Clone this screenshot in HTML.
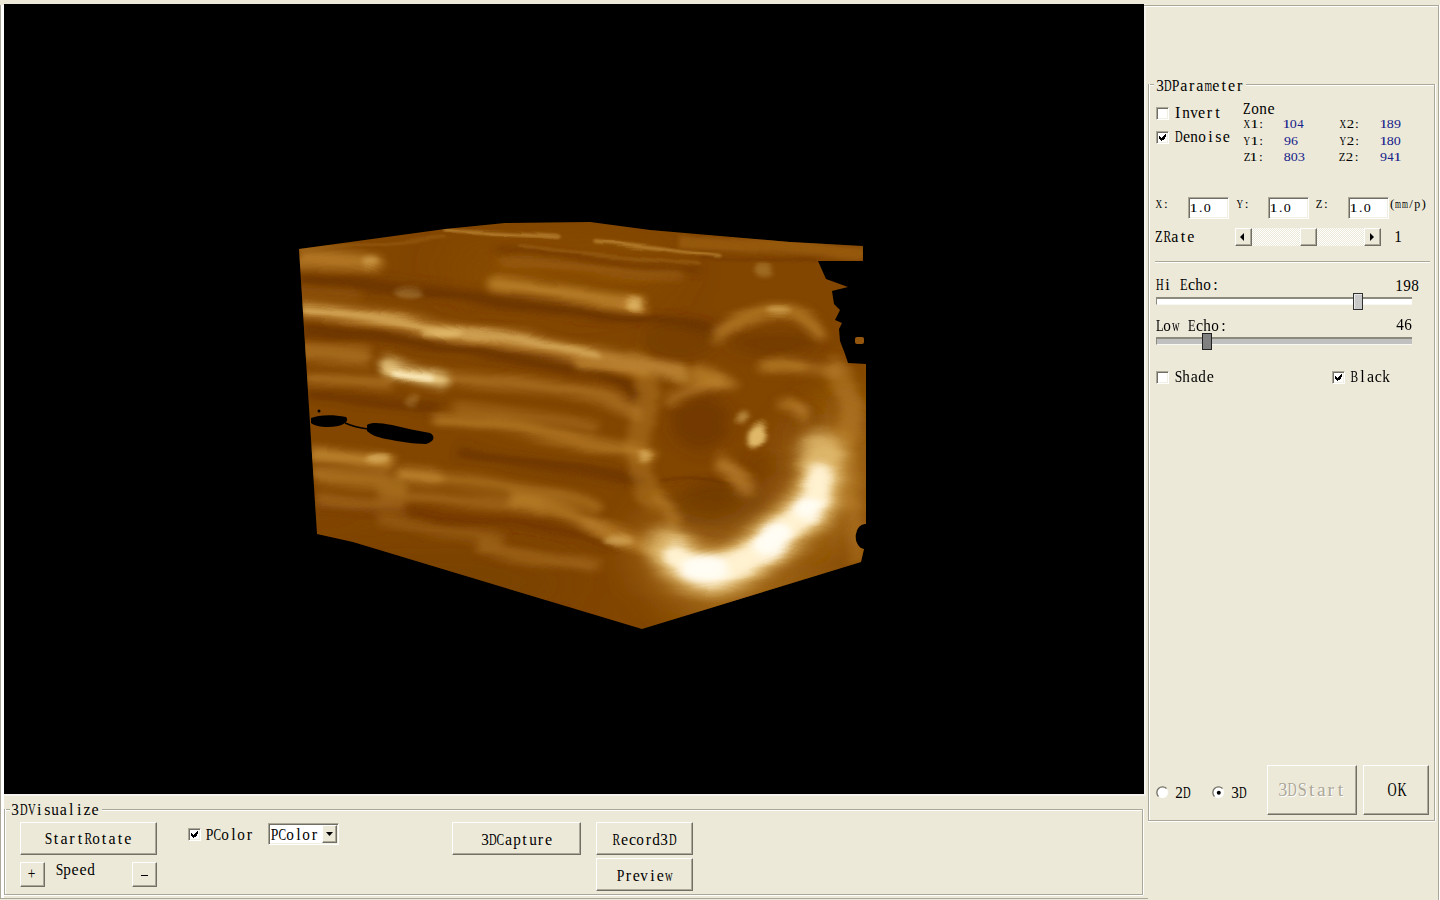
<!DOCTYPE html>
<html><head><meta charset="utf-8">
<style>
html,body{margin:0;padding:0;}
body{width:1440px;height:900px;overflow:hidden;background:#ECE9D8;position:relative;font-family:"Liberation Serif",serif;color:#000;}
.a{position:absolute;}
.t{position:absolute;white-space:nowrap;}
.t i{display:inline-block;font-style:normal;}
.hl{position:absolute;height:1px;background:#ACA899;box-shadow:0 1px 0 #fff;}
.vl{position:absolute;width:1px;background:#ACA899;box-shadow:1px 0 0 #fff;}
.btn{position:absolute;box-sizing:border-box;background:#ECE9D8;border-top:1px solid #fff;border-left:1px solid #fff;border-right:1px solid #716F64;border-bottom:1px solid #716F64;box-shadow:inset -1px -1px 0 #ACA899;}
.cb{position:absolute;box-sizing:border-box;width:13px;height:13px;background:#fff;border-top:1px solid #ACA899;border-left:1px solid #ACA899;border-right:1px solid #fff;border-bottom:1px solid #fff;box-shadow:inset 1px 1px 0 #716F64,inset -1px -1px 0 #F1EFE2;}
.ed{position:absolute;box-sizing:border-box;background:#fff;border-top:1px solid #ACA899;border-left:1px solid #ACA899;border-right:1px solid #fff;border-bottom:1px solid #fff;box-shadow:inset 1px 1px 0 #716F64,inset -1px -1px 0 #F1EFE2;}
</style></head><body>
<!-- left outer frame -->
<div class="a" style="left:0;top:5px;width:1px;height:894px;background:#ACA899"></div>
<div class="a" style="left:1px;top:5px;width:3px;height:893px;background:#fff"></div>
<div class="a" style="left:0;top:898px;width:1148px;height:1px;background:#ACA899"></div>
<div class="a" style="left:4px;top:4px;width:1140px;height:790px;background:#000"></div>
<svg class="a" style="left:0;top:0" width="1144" height="794" viewBox="0 0 1144 794">
<defs>
<clipPath id="box"><path d="M299 249 L445 229 L505 223 L590 222 L650 230 L790 242 L863 246 L863 261 L818 261 L826 279 L848 287 L832 291 L834 304 L840 310 L835 320 L842 323 L839 329 L840 341 L845 354 L848 363 L866 364 L866 524 A9 12 0 0 0 864 549 L861 562 L642 629 L353 542 L317 534 Z"/></clipPath>
<filter id="b1" filterUnits="userSpaceOnUse" x="250" y="180" width="680" height="500"><feGaussianBlur stdDeviation="1.5"/></filter>
<filter id="b2" filterUnits="userSpaceOnUse" x="250" y="180" width="680" height="500"><feGaussianBlur stdDeviation="2.5"/></filter>
<filter id="b4" filterUnits="userSpaceOnUse" x="250" y="180" width="680" height="500"><feGaussianBlur stdDeviation="4.5"/></filter>
<filter id="b7" filterUnits="userSpaceOnUse" x="250" y="180" width="680" height="500"><feGaussianBlur stdDeviation="7"/></filter>
<filter id="b12" filterUnits="userSpaceOnUse" x="250" y="180" width="680" height="500"><feGaussianBlur stdDeviation="12"/></filter>
<filter id="b20" filterUnits="userSpaceOnUse" x="250" y="180" width="680" height="500"><feGaussianBlur stdDeviation="20"/></filter>
<filter id="warp" filterUnits="userSpaceOnUse" x="250" y="180" width="680" height="500"><feTurbulence type="fractalNoise" baseFrequency="0.012 0.05" numOctaves="2" seed="7" result="n"/><feDisplacementMap in="SourceGraphic" in2="n" scale="10" xChannelSelector="R" yChannelSelector="G"/></filter>
</defs>
<g clip-path="url(#box)">
<rect x="290" y="215" width="590" height="420" fill="#824600"/>
<g filter="url(#warp)">
<!-- broad tonal zones -->
<g filter="url(#b20)">
<ellipse cx="430" cy="580" rx="150" ry="40" fill="#703800" opacity="0.35"/>
<ellipse cx="845" cy="470" rx="28" ry="95" fill="#a06616" opacity="0.7"/>
<ellipse cx="770" cy="600" rx="100" ry="25" fill="#a87020" opacity="0.6"/>
<ellipse cx="560" cy="270" rx="120" ry="30" fill="#8e5008" opacity="0.6"/>
</g>
<!-- dark bands -->
<g filter="url(#b4)" stroke="#683000" fill="none" stroke-linecap="round" opacity="0.85">
<path d="M305 281 C360 282 420 290 480 298 C540 306 590 312 640 318" stroke-width="12"/>
<path d="M305 330 C360 334 420 342 470 350 C520 358 560 364 600 374 C620 382 630 390 635 400" stroke-width="12"/>
<path d="M310 395 C360 398 400 405 440 408" stroke-width="8"/>
<path d="M460 452 C520 462 580 470 640 480" stroke-width="9"/>
<path d="M315 505 C380 508 440 520 520 524 C560 528 590 534 610 545" stroke-width="8" opacity="0.7"/>
<path d="M500 252 C560 256 620 262 700 272" stroke-width="5"/>
<path d="M650 318 C680 322 700 326 720 332" stroke-width="10"/>
<path d="M360 600 C420 610 480 620 560 615" stroke-width="16" opacity="0.5"/>
</g>
<!-- ring interior dark -->
<g filter="url(#b7)" fill="#663000">
<ellipse cx="700" cy="422" rx="30" ry="28" opacity="0.55"/>
<ellipse cx="775" cy="343" rx="45" ry="12" opacity="0.5"/>
<ellipse cx="808" cy="440" rx="18" ry="35" opacity="0.4"/>
<ellipse cx="720" cy="508" rx="50" ry="24" opacity="0.6"/>
<ellipse cx="770" cy="480" rx="30" ry="25" opacity="0.4"/>
<ellipse cx="680" cy="340" rx="40" ry="20" opacity="0.35"/>
</g>
<g filter="url(#b1)" stroke="#5a2800" fill="none" opacity="0.5">
<path d="M680 532 C710 537 740 539 770 536" stroke-width="2.5"/>
<path d="M660 480 C690 478 720 482 760 490" stroke-width="2"/>
<path d="M460 330 C500 334 530 340 560 350" stroke-width="2"/>
</g>
<!-- medium light bands -->
<g filter="url(#b4)" stroke="#c08630" fill="none" stroke-linecap="round">
<path d="M303 260 C330 259 355 261 377 264" stroke-width="14" opacity="0.8"/>
<path d="M495 284 C530 288 570 294 600 298 C615 300 628 302 638 303" stroke-width="14" opacity="0.85"/>
<path d="M580 362 C600 364 620 368 645 372" stroke-width="13" opacity="0.8"/>
<path d="M308 379 C330 379 360 380 388 382" stroke-width="11" opacity="0.6"/>
<path d="M438 420 C460 421 480 422 495 424 C530 430 555 436 580 441 C610 446 630 450 650 455" stroke-width="12" opacity="0.7"/>
<path d="M450 378 C490 380 530 384 570 390 C600 396 620 404 635 412" stroke-width="12" opacity="0.6"/><path d="M304 352 C325 353 345 355 365 357" stroke-width="14" opacity="0.6"/><path d="M318 478 C340 479 370 482 400 486" stroke-width="12" opacity="0.55"/>
<path d="M320 500 C345 502 370 505 400 508" stroke-width="12" opacity="0.45"/>
<path d="M442 478 C480 482 520 490 560 496 C580 500 595 504 595 506" stroke-width="12" opacity="0.55"/>
<path d="M460 408 C500 412 540 418 595 426" stroke-width="9" opacity="0.5"/>
<path d="M480 548 C520 555 560 560 595 566" stroke-width="12" opacity="0.45"/>
<path d="M380 520 C420 526 460 534 500 540" stroke-width="10" opacity="0.35"/>
<path d="M700 372 C712 376 722 380 730 384" stroke-width="16" opacity="0.5"/>
<path d="M768 366 C790 364 812 366 834 372" stroke-width="12" opacity="0.45"/>
<path d="M722 465 C732 472 742 480 750 488" stroke-width="16" opacity="0.5"/>
<path d="M660 500 C665 508 670 515 675 520" stroke-width="14" opacity="0.55"/>
<path d="M588 523 C610 530 630 540 650 548" stroke-width="12" opacity="0.6"/>
<path d="M790 402 C795 406 800 412 802 418" stroke-width="12" opacity="0.5"/>
<path d="M850 500 C855 520 858 540 856 560" stroke-width="16" opacity="0.35"/>
<path d="M315 455 C340 457 365 459 388 462" stroke-width="13" opacity="0.95"/>
<path d="M316 473 C340 473 365 474 390 476" stroke-width="9" opacity="0.45"/>
<path d="M405 474 C415 475 425 476 435 477" stroke-width="14" opacity="0.9"/>
<path d="M380 494 C410 496 440 498 470 500 C490 502 510 503 540 508" stroke-width="10" opacity="0.5"/>
<path d="M515 500 C545 504 570 512 590 524 C605 534 625 540 645 545" stroke-width="12" opacity="0.7"/>
<path d="M638 362 C648 378 650 398 642 420 C636 440 640 470 650 500" stroke-width="24" opacity="0.4"/>
<path d="M682 376 C695 378 710 380 720 383" stroke-width="16" opacity="0.55"/>

<path d="M840 440 C848 460 850 480 848 500" stroke-width="22" opacity="0.4"/>
<path d="M722 462 C730 470 740 480 745 488" stroke-width="16" opacity="0.45"/>

<path d="M720 336 C732 324 748 316 770 311 C790 308 805 316 820 334" stroke-width="13" opacity="0.7"/><path d="M670 400 C685 392 700 386 722 384" stroke-width="10" opacity="0.6"/><path d="M764 366 C775 362 790 362 800 366" stroke-width="12" opacity="0.55"/><path d="M835 370 C850 390 855 410 850 430" stroke-width="22" opacity="0.5"/><path d="M780 405 C788 408 795 410 800 412" stroke-width="12" opacity="0.5"/><path d="M622 300 L638 302" stroke-width="12" opacity="0.6"/><path d="M620 366 L636 368" stroke-width="12" opacity="0.5"/>
<path d="M500 262 C560 266 620 272 680 276" stroke-width="6" opacity="0.45"/>
<path d="M300 292 C320 292 340 294 360 296" stroke-width="6" opacity="0.3"/>
</g>
<!-- stripe A -->
<path d="M303 310 C340 312 370 318 395 322 C430 330 470 334 500 339 C540 346 570 352 600 357 C625 362 650 368 680 372" stroke="#b88030" stroke-width="16" fill="none" filter="url(#b4)" stroke-linecap="round"/>
<path d="M305 309 C340 311 370 317 395 321 C430 329 470 332 500 337 C540 344 570 350 598 355" stroke="#dab060" stroke-width="6" fill="none" filter="url(#b2)" stroke-linecap="round" opacity="0.85"/>
<!-- thin top lines -->
<g filter="url(#b1)" stroke="#c89440" fill="none" stroke-linecap="round" opacity="0.85">
<path d="M446 230 C470 231 500 233 557 236" stroke-width="3"/>
<path d="M595 241 C630 244 665 249 719 256" stroke-width="3"/>
<path d="M300 252 C360 245 420 240 445 238" stroke-width="2" opacity="0.4"/>
<path d="M520 248 C580 252 640 258 700 264" stroke-width="2" opacity="0.5"/>
</g>
<!-- bright spots -->
<g filter="url(#b2)" fill="#e6c070">

<ellipse cx="410" cy="292" rx="14" ry="6" opacity="0.3"/>
<ellipse cx="440" cy="332" rx="22" ry="4" opacity="0.8"/>
<ellipse cx="633" cy="302" rx="8" ry="5" opacity="0.75"/>
<ellipse cx="763" cy="270" rx="9" ry="6" opacity="0.3"/>
<ellipse cx="757" cy="436" rx="9" ry="13" opacity="0.95" transform="rotate(20 757 436)"/>
<ellipse cx="742" cy="416" rx="6" ry="6" opacity="0.5"/>
<ellipse cx="778" cy="311" rx="12" ry="4" opacity="0.55"/>
<ellipse cx="645" cy="456" rx="6" ry="5" opacity="0.6"/>
<ellipse cx="412" cy="400" rx="7" ry="6" opacity="0.25"/>
<ellipse cx="376" cy="458" rx="12" ry="5" opacity="0.6"/>
<ellipse cx="620" cy="541" rx="16" ry="5" opacity="0.6"/>
<ellipse cx="370" cy="262" rx="8" ry="5" opacity="0.4"/>
</g>
<path d="M388 366 C398 370 410 374 425 377 C432 378 438 379 442 380" stroke="#e8c880" stroke-width="16" fill="none" filter="url(#b4)" stroke-linecap="round"/>
<path d="M396 371 C405 374 415 376 430 378" stroke="#fcecc0" stroke-width="8" fill="none" filter="url(#b2)" stroke-linecap="round" opacity="0.9"/>
<!-- white arc -->
<path d="M669 551 C685 566 700 572 715 572 C735 570 755 555 772 540 C790 525 805 512 815 503 C820 492 822 475 822 455" stroke="#b07828" stroke-width="70" fill="none" filter="url(#b20)" opacity="0.75" stroke-linecap="round"/>
<path d="M669 551 C685 566 700 572 715 572 C735 570 755 555 772 540 C790 525 805 512 815 503 C820 492 822 475 822 455" stroke="#e8c478" stroke-width="44" fill="none" filter="url(#b7)" opacity="0.85" stroke-linecap="round"/>
<path d="M676 556 C690 567 702 572 715 572 C735 570 755 555 772 540 C790 525 805 512 815 503 C819 494 820 485 820 478" stroke="#fff2d0" stroke-width="26" fill="none" filter="url(#b4)" stroke-linecap="round"/>
<g filter="url(#b4)" fill="#fffdf4">
<ellipse cx="705" cy="569" rx="24" ry="12"/>
<ellipse cx="772" cy="540" rx="20" ry="13" transform="rotate(-40 772 540)"/>
<ellipse cx="808" cy="508" rx="13" ry="10"/>
</g>
<!-- top ledge right -->
<path d="M680 240 C740 244 800 248 863 253" stroke="#a46818" stroke-width="12" filter="url(#b2)" opacity="0.6"/><path d="M700 258 C760 260 800 262 818 262" stroke="#6a3200" stroke-width="3" filter="url(#b1)" opacity="0.5"/>
</g>
<!-- cracks -->
<path d="M311 418 C318 415 332 414 346 417 C349 420 346 424 338 426 C328 428 316 427 311 423 Z" fill="#000"/>
<path d="M345 423 C352 426 360 428 368 429" stroke="#000" stroke-width="1.5" fill="none"/>
<path d="M367 425 C372 422 380 423 392 425 C405 428 418 431 430 433 C436 436 434 442 426 444 C412 444 398 441 386 439 C376 437 370 434 367 431 Z" fill="#000"/>
<circle cx="319" cy="411" r="1.5" fill="#000"/>
</g>
<rect x="855" y="337" width="9" height="7" rx="2" fill="#94560c"/>
</svg>
<div class="a" style="left:1144px;top:4px;width:2px;height:792px;background:#f4f3ee"></div>
<div class="a" style="left:4px;top:794px;width:1142px;height:2px;background:#f4f3ee"></div>
<div class="hl" style="left:1144px;top:5px;width:1295px"></div>
<div class="vl" style="left:1438px;top:5px;height:895px"></div>
<div class="hl" style="left:1148px;top:84px;width:287px"></div>
<div class="vl" style="left:1148px;top:84px;height:737px"></div>
<div class="vl" style="left:1434px;top:84px;height:737px"></div>
<div class="hl" style="left:1148px;top:820px;width:287px"></div>
<div class="a" style="left:1154px;top:80px;width:92px;height:8px;background:#ECE9D8"></div>
<div class="t" style="left:1155.77px;top:77.60px;font-size:16px;line-height:16px;"><i style="width:8.00px;margin:0 0.00px;transform:scaleX(0.950)">3</i><i style="width:11.55px;margin:0 -1.78px;transform:scaleX(0.658)">D</i><i style="width:8.90px;margin:0 -0.45px;transform:scaleX(0.854)">P</i><i style="width:7.10px;margin:0 0.45px">a</i><i style="width:5.33px;margin:0 1.34px">r</i><i style="width:7.10px;margin:0 0.45px">a</i><i style="width:12.45px;margin:0 -2.22px;transform:scaleX(0.611)">m</i><i style="width:7.10px;margin:0 0.45px">e</i><i style="width:4.45px;margin:0 1.78px">t</i><i style="width:7.10px;margin:0 0.45px">e</i><i style="width:5.33px;margin:0 1.34px">r</i></div>
<div class="cb" style="left:1156px;top:107px"></div>
<div class="t" style="left:1173.59px;top:105.35px;font-size:16px;line-height:16px;"><i style="width:5.33px;margin:0 1.34px">I</i><i style="width:8.00px;margin:0 0.00px;transform:scaleX(0.950)">n</i><i style="width:8.00px;margin:0 0.00px;transform:scaleX(0.950)">v</i><i style="width:7.10px;margin:0 0.45px">e</i><i style="width:5.33px;margin:0 1.34px">r</i><i style="width:4.45px;margin:0 1.78px">t</i></div>
<div class="cb" style="left:1156px;top:131px"></div>
<svg class="a" style="left:1159px;top:134px" width="7" height="7" viewBox="0 0 7 7"><path d="M6 0h1v3h-1zM5 1h1v4h-1zM4 2h1v4h-1zM3 3h1v3h-1zM2 4h1v3h-1zM1 3h1v3h-1zM0 2h1v3h-1z" fill="#000" shape-rendering="crispEdges"/></svg>
<div class="t" style="left:1174.50px;top:129.30px;font-size:16px;line-height:16px;"><i style="width:11.55px;margin:0 -1.78px;transform:scaleX(0.658)">D</i><i style="width:7.10px;margin:0 0.45px">e</i><i style="width:8.00px;margin:0 0.00px;transform:scaleX(0.950)">n</i><i style="width:8.00px;margin:0 0.00px;transform:scaleX(0.950)">o</i><i style="width:4.45px;margin:0 1.78px">i</i><i style="width:6.23px;margin:0 0.89px">s</i><i style="width:7.10px;margin:0 0.45px">e</i></div>
<div class="t" style="left:1242.95px;top:101.20px;font-size:16px;line-height:16px;"><i style="width:9.77px;margin:0 -0.89px;transform:scaleX(0.778)">Z</i><i style="width:8.00px;margin:0 0.00px;transform:scaleX(0.950)">o</i><i style="width:8.00px;margin:0 0.00px;transform:scaleX(0.950)">n</i><i style="width:7.10px;margin:0 0.45px">e</i></div>
<div class="t" style="left:1243.62px;top:117.39px;font-size:13.5px;line-height:13.5px;"><i style="width:9.75px;margin:0 -1.37px;transform:scaleX(0.682)">X</i><i style="width:6.75px;margin:0 0.12px;transform:scaleX(1.252)">1</i><i style="width:3.75px;margin:0 1.62px">:</i></div>
<div class="t" style="left:1283.24px;top:117.39px;font-size:13.5px;line-height:13.5px;color:#14208a;"><i style="width:6.75px;margin:0 0.12px;transform:scaleX(1.252)">1</i><i style="width:6.75px;margin:0 0.12px;transform:scaleX(1.040)">0</i><i style="width:6.75px;margin:0 0.12px;transform:scaleX(0.948)">4</i></div>
<div class="t" style="left:1339.42px;top:117.39px;font-size:13.5px;line-height:13.5px;"><i style="width:9.75px;margin:0 -1.37px;transform:scaleX(0.682)">X</i><i style="width:6.75px;margin:0 0.12px;transform:scaleX(1.099)">2</i><i style="width:3.75px;margin:0 1.62px">:</i></div>
<div class="t" style="left:1379.64px;top:117.39px;font-size:13.5px;line-height:13.5px;color:#14208a;"><i style="width:6.75px;margin:0 0.12px;transform:scaleX(1.252)">1</i><i style="width:6.75px;margin:0 0.12px;transform:scaleX(1.040)">8</i><i style="width:6.75px;margin:0 0.12px;transform:scaleX(1.033)">9</i></div>
<div class="t" style="left:1243.72px;top:133.59px;font-size:13.5px;line-height:13.5px;"><i style="width:9.75px;margin:0 -1.37px;transform:scaleX(0.682)">Y</i><i style="width:6.75px;margin:0 0.12px;transform:scaleX(1.252)">1</i><i style="width:3.75px;margin:0 1.62px">:</i></div>
<div class="t" style="left:1283.54px;top:133.59px;font-size:13.5px;line-height:13.5px;color:#14208a;"><i style="width:6.75px;margin:0 0.12px;transform:scaleX(1.033)">9</i><i style="width:6.75px;margin:0 0.12px;transform:scaleX(1.032)">6</i></div>
<div class="t" style="left:1339.52px;top:133.59px;font-size:13.5px;line-height:13.5px;"><i style="width:9.75px;margin:0 -1.37px;transform:scaleX(0.682)">Y</i><i style="width:6.75px;margin:0 0.12px;transform:scaleX(1.099)">2</i><i style="width:3.75px;margin:0 1.62px">:</i></div>
<div class="t" style="left:1379.64px;top:133.59px;font-size:13.5px;line-height:13.5px;color:#14208a;"><i style="width:6.75px;margin:0 0.12px;transform:scaleX(1.252)">1</i><i style="width:6.75px;margin:0 0.12px;transform:scaleX(1.040)">8</i><i style="width:6.75px;margin:0 0.12px;transform:scaleX(1.040)">0</i></div>
<div class="t" style="left:1243.30px;top:149.79px;font-size:13.5px;line-height:13.5px;"><i style="width:8.25px;margin:0 -0.62px;transform:scaleX(0.806)">Z</i><i style="width:6.75px;margin:0 0.12px;transform:scaleX(1.252)">1</i><i style="width:3.75px;margin:0 1.62px">:</i></div>
<div class="t" style="left:1283.47px;top:149.79px;font-size:13.5px;line-height:13.5px;color:#14208a;"><i style="width:6.75px;margin:0 0.12px;transform:scaleX(1.040)">8</i><i style="width:6.75px;margin:0 0.12px;transform:scaleX(1.040)">0</i><i style="width:6.75px;margin:0 0.12px;transform:scaleX(1.067)">3</i></div>
<div class="t" style="left:1339.10px;top:149.79px;font-size:13.5px;line-height:13.5px;"><i style="width:8.25px;margin:0 -0.62px;transform:scaleX(0.806)">Z</i><i style="width:6.75px;margin:0 0.12px;transform:scaleX(1.099)">2</i><i style="width:3.75px;margin:0 1.62px">:</i></div>
<div class="t" style="left:1379.94px;top:149.79px;font-size:13.5px;line-height:13.5px;color:#14208a;"><i style="width:6.75px;margin:0 0.12px;transform:scaleX(1.033)">9</i><i style="width:6.75px;margin:0 0.12px;transform:scaleX(0.948)">4</i><i style="width:6.75px;margin:0 0.12px;transform:scaleX(1.252)">1</i></div>
<div class="t" style="left:1155.32px;top:197.44px;font-size:13.5px;line-height:13.5px;"><i style="width:9.75px;margin:0 -1.37px;transform:scaleX(0.682)">X</i><i style="width:3.75px;margin:0 1.62px">:</i></div>
<div class="ed" style="left:1188px;top:197px;width:41px;height:22px"></div>
<div class="t" style="left:1190.24px;top:200.59px;font-size:13.5px;line-height:13.5px;"><i style="width:6.75px;margin:0 0.12px;transform:scaleX(1.252)">1</i><i style="width:3.38px;margin:0 1.81px">.</i><i style="width:6.75px;margin:0 0.12px;transform:scaleX(1.040)">0</i></div>
<div class="t" style="left:1236.22px;top:197.44px;font-size:13.5px;line-height:13.5px;"><i style="width:9.75px;margin:0 -1.37px;transform:scaleX(0.682)">Y</i><i style="width:3.75px;margin:0 1.62px">:</i></div>
<div class="ed" style="left:1268px;top:197px;width:41px;height:22px"></div>
<div class="t" style="left:1270.24px;top:200.59px;font-size:13.5px;line-height:13.5px;"><i style="width:6.75px;margin:0 0.12px;transform:scaleX(1.252)">1</i><i style="width:3.38px;margin:0 1.81px">.</i><i style="width:6.75px;margin:0 0.12px;transform:scaleX(1.040)">0</i></div>
<div class="t" style="left:1315.30px;top:197.44px;font-size:13.5px;line-height:13.5px;"><i style="width:8.25px;margin:0 -0.62px;transform:scaleX(0.806)">Z</i><i style="width:3.75px;margin:0 1.62px">:</i></div>
<div class="ed" style="left:1348px;top:197px;width:41px;height:22px"></div>
<div class="t" style="left:1350.24px;top:200.59px;font-size:13.5px;line-height:13.5px;"><i style="width:6.75px;margin:0 0.12px;transform:scaleX(1.252)">1</i><i style="width:3.38px;margin:0 1.81px">.</i><i style="width:6.75px;margin:0 0.12px;transform:scaleX(1.040)">0</i></div>
<div class="t" style="left:1388.94px;top:197.11px;font-size:13px;line-height:13px;"><i style="width:4.33px;margin:0 0.99px">(</i><i style="width:10.11px;margin:0 -1.91px;transform:scaleX(0.592)">m</i><i style="width:10.11px;margin:0 -1.91px;transform:scaleX(0.592)">m</i><i style="width:3.61px;margin:0 1.34px">/</i><i style="width:6.50px;margin:0 -0.10px;transform:scaleX(0.921)">p</i><i style="width:4.33px;margin:0 0.99px">)</i></div>
<div class="t" style="left:1154.90px;top:229.20px;font-size:16px;line-height:16px;"><i style="width:9.77px;margin:0 -0.89px;transform:scaleX(0.778)">Z</i><i style="width:10.67px;margin:0 -1.34px;transform:scaleX(0.712)">R</i><i style="width:7.10px;margin:0 0.45px">a</i><i style="width:4.45px;margin:0 1.78px">t</i><i style="width:7.10px;margin:0 0.45px">e</i></div>
<div class="a" style="left:1235px;top:228px;width:146px;height:18px;background-image:conic-gradient(#fff 25%,#ECE9D8 0 50%,#fff 0 75%,#ECE9D8 0);background-size:2px 2px;"></div>
<div class="btn" style="left:1235px;top:228px;width:17px;height:18px"></div>
<svg class="a" style="left:1240px;top:233px" width="6" height="8"><path d="M4 0 L0 4 L4 8Z" fill="#000"/></svg>
<div class="btn" style="left:1300px;top:228px;width:17px;height:18px"></div>
<div class="btn" style="left:1364px;top:228px;width:17px;height:18px"></div>
<svg class="a" style="left:1370px;top:233px" width="6" height="8"><path d="M0 0 L4 4 L0 8Z" fill="#000"/></svg>
<div class="t" style="left:1394.46px;top:229.20px;font-size:16px;line-height:16px;"><i style="width:8.00px;margin:0 0.00px;transform:scaleX(0.950)">1</i></div>
<div class="hl" style="left:1155px;top:261px;width:275px"></div>
<div class="t" style="left:1155.50px;top:277.40px;font-size:16px;line-height:16px;"><i style="width:11.55px;margin:0 -1.78px;transform:scaleX(0.658)">H</i><i style="width:4.45px;margin:0 1.78px">i</i><i style="width:8px"></i><i style="width:9.77px;margin:0 -0.89px;transform:scaleX(0.778)">E</i><i style="width:7.10px;margin:0 0.45px">c</i><i style="width:8.00px;margin:0 0.00px;transform:scaleX(0.950)">h</i><i style="width:8.00px;margin:0 0.00px;transform:scaleX(0.950)">o</i><i style="width:4.45px;margin:0 1.78px">:</i></div>
<div class="t" style="left:1394.86px;top:277.60px;font-size:16px;line-height:16px;"><i style="width:8.00px;margin:0 0.00px;transform:scaleX(0.950)">1</i><i style="width:8.00px;margin:0 0.00px;transform:scaleX(0.950)">9</i><i style="width:8.00px;margin:0 0.00px;transform:scaleX(0.950)">8</i></div>
<div class="a" style="left:1156px;top:297px;width:256px;height:8px;box-sizing:border-box;background:#fff;border-top:2px solid #8c8a7c;border-left:1px solid #8c8a7c;border-bottom:1px solid #f8f7f2"></div>
<div class="a" style="left:1353px;top:293px;width:10px;height:17px;box-sizing:border-box;background:#c8c8c8;border:1px solid #303030;box-shadow:inset 1px 1px 0 #e8e8e8"></div>
<div class="t" style="left:1155.44px;top:317.50px;font-size:16px;line-height:16px;"><i style="width:9.77px;margin:0 -0.89px;transform:scaleX(0.778)">L</i><i style="width:8.00px;margin:0 0.00px;transform:scaleX(0.950)">o</i><i style="width:11.55px;margin:0 -1.78px;transform:scaleX(0.658)">w</i><i style="width:8px"></i><i style="width:9.77px;margin:0 -0.89px;transform:scaleX(0.778)">E</i><i style="width:7.10px;margin:0 0.45px">c</i><i style="width:8.00px;margin:0 0.00px;transform:scaleX(0.950)">h</i><i style="width:8.00px;margin:0 0.00px;transform:scaleX(0.950)">o</i><i style="width:4.45px;margin:0 1.78px">:</i></div>
<div class="t" style="left:1396.20px;top:317.20px;font-size:16px;line-height:16px;"><i style="width:8.00px;margin:0 0.00px;transform:scaleX(0.950)">4</i><i style="width:8.00px;margin:0 0.00px;transform:scaleX(0.950)">6</i></div>
<div class="a" style="left:1156px;top:337px;width:256px;height:8px;box-sizing:border-box;background:#c0c0c0;border-top:2px solid #8c8a7c;border-left:1px solid #8c8a7c;border-bottom:1px solid #f8f7f2"></div>
<div class="a" style="left:1202px;top:333px;width:10px;height:17px;box-sizing:border-box;background:#808080;border:1px solid #202020"></div>
<div class="cb" style="left:1156px;top:371px"></div>
<div class="t" style="left:1174.39px;top:369.20px;font-size:16px;line-height:16px;"><i style="width:8.90px;margin:0 -0.45px;transform:scaleX(0.854)">S</i><i style="width:8.00px;margin:0 0.00px;transform:scaleX(0.950)">h</i><i style="width:7.10px;margin:0 0.45px">a</i><i style="width:8.00px;margin:0 0.00px;transform:scaleX(0.950)">d</i><i style="width:7.10px;margin:0 0.45px">e</i></div>
<div class="cb" style="left:1332px;top:371px"></div>
<svg class="a" style="left:1335px;top:374px" width="7" height="7" viewBox="0 0 7 7"><path d="M6 0h1v3h-1zM5 1h1v4h-1zM4 2h1v4h-1zM3 3h1v3h-1zM2 4h1v3h-1zM1 3h1v3h-1zM0 2h1v3h-1z" fill="#000" shape-rendering="crispEdges"/></svg>
<div class="t" style="left:1350.47px;top:369.20px;font-size:16px;line-height:16px;"><i style="width:10.67px;margin:0 -1.34px;transform:scaleX(0.712)">B</i><i style="width:4.45px;margin:0 1.78px">l</i><i style="width:7.10px;margin:0 0.45px">a</i><i style="width:7.10px;margin:0 0.45px">c</i><i style="width:8.00px;margin:0 0.00px;transform:scaleX(0.950)">k</i></div>
<svg class="a" style="left:1156px;top:786px" width="13" height="13"><circle cx="6.5" cy="6.5" r="5.5" fill="#fff"/><path d="M2.5 10.5 A5.5 5.5 0 0 1 10.5 2.5" stroke="#716F64" stroke-width="1.3" fill="none"/></svg>
<div class="t" style="left:1174.93px;top:785.35px;font-size:16px;line-height:16px;"><i style="width:8.00px;margin:0 0.00px;transform:scaleX(0.950)">2</i><i style="width:11.55px;margin:0 -1.78px;transform:scaleX(0.658)">D</i></div>
<svg class="a" style="left:1212px;top:786px" width="13" height="13"><circle cx="6.5" cy="6.5" r="5.5" fill="#fff"/><path d="M2.5 10.5 A5.5 5.5 0 0 1 10.5 2.5" stroke="#716F64" stroke-width="1.3" fill="none"/><circle cx="6.8" cy="6.8" r="2" fill="#000"/></svg>
<div class="t" style="left:1230.77px;top:785.35px;font-size:16px;line-height:16px;"><i style="width:8.00px;margin:0 0.00px;transform:scaleX(0.950)">3</i><i style="width:11.55px;margin:0 -1.78px;transform:scaleX(0.658)">D</i></div>
<div class="btn" style="left:1267px;top:765px;width:90px;height:50px"></div>
<div class="t" style="left:1278.09px;top:779.67px;font-size:19.5px;line-height:19.5px;color:#ACA899;text-shadow:1px 1px 0 #fff;"><i style="width:9.75px;margin:0 -0.08px;transform:scaleX(0.935)">3</i><i style="width:14.08px;margin:0 -2.24px;transform:scaleX(0.648)">D</i><i style="width:10.84px;margin:0 -0.62px;transform:scaleX(0.841)">S</i><i style="width:5.42px;margin:0 2.09px">t</i><i style="width:8.66px;margin:0 0.47px">a</i><i style="width:6.49px;margin:0 1.55px">r</i><i style="width:5.42px;margin:0 2.09px">t</i></div>
<div class="btn" style="left:1363px;top:765px;width:66px;height:50px"></div>
<div class="t" style="left:1387.64px;top:779.67px;font-size:19.5px;line-height:19.5px;"><i style="width:14.08px;margin:0 -2.24px;transform:scaleX(0.648)">O</i><i style="width:14.08px;margin:0 -2.24px;transform:scaleX(0.648)">K</i></div>
<div class="hl" style="left:4px;top:809px;width:1139px"></div>
<div class="vl" style="left:4px;top:809px;height:86px"></div>
<div class="vl" style="left:1142px;top:809px;height:86px"></div>
<div class="hl" style="left:4px;top:894px;width:1139px"></div>
<div class="a" style="left:10px;top:805px;width:92px;height:8px;background:#ECE9D8"></div>
<div class="t" style="left:11.27px;top:802.30px;font-size:16px;line-height:16px;"><i style="width:8.00px;margin:0 0.00px;transform:scaleX(0.950)">3</i><i style="width:11.55px;margin:0 -1.78px;transform:scaleX(0.658)">D</i><i style="width:11.55px;margin:0 -1.78px;transform:scaleX(0.658)">V</i><i style="width:4.45px;margin:0 1.78px">i</i><i style="width:6.23px;margin:0 0.89px">s</i><i style="width:8.00px;margin:0 0.00px;transform:scaleX(0.950)">u</i><i style="width:7.10px;margin:0 0.45px">a</i><i style="width:4.45px;margin:0 1.78px">l</i><i style="width:4.45px;margin:0 1.78px">i</i><i style="width:7.10px;margin:0 0.45px">z</i><i style="width:7.10px;margin:0 0.45px">e</i></div>
<div class="btn" style="left:20px;top:822px;width:137px;height:33px"></div>
<div class="t" style="left:44.09px;top:831.00px;font-size:16px;line-height:16px;"><i style="width:8.90px;margin:0 -0.45px;transform:scaleX(0.854)">S</i><i style="width:4.45px;margin:0 1.78px">t</i><i style="width:7.10px;margin:0 0.45px">a</i><i style="width:5.33px;margin:0 1.34px">r</i><i style="width:4.45px;margin:0 1.78px">t</i><i style="width:10.67px;margin:0 -1.34px;transform:scaleX(0.712)">R</i><i style="width:8.00px;margin:0 0.00px;transform:scaleX(0.950)">o</i><i style="width:4.45px;margin:0 1.78px">t</i><i style="width:7.10px;margin:0 0.45px">a</i><i style="width:4.45px;margin:0 1.78px">t</i><i style="width:7.10px;margin:0 0.45px">e</i></div>
<div class="btn" style="left:20px;top:862px;width:25px;height:25px"></div>
<div class="t" style="left:27.13px;top:865.60px;font-size:16px;line-height:16px;"><i style="width:9.02px;margin:0 -0.51px;transform:scaleX(0.842)">+</i></div>
<div class="t" style="left:55.09px;top:862.20px;font-size:16px;line-height:16px;"><i style="width:8.90px;margin:0 -0.45px;transform:scaleX(0.854)">S</i><i style="width:8.00px;margin:0 0.00px;transform:scaleX(0.950)">p</i><i style="width:7.10px;margin:0 0.45px">e</i><i style="width:7.10px;margin:0 0.45px">e</i><i style="width:8.00px;margin:0 0.00px;transform:scaleX(0.950)">d</i></div>
<div class="btn" style="left:132px;top:862px;width:25px;height:25px"></div>
<div class="a" style="left:141px;top:875px;width:7px;height:1px;background:#000"></div>
<div class="cb" style="left:188px;top:828px"></div>
<svg class="a" style="left:191px;top:831px" width="7" height="7" viewBox="0 0 7 7"><path d="M6 0h1v3h-1zM5 1h1v4h-1zM4 2h1v4h-1zM3 3h1v3h-1zM2 4h1v3h-1zM1 3h1v3h-1zM0 2h1v3h-1z" fill="#000" shape-rendering="crispEdges"/></svg>
<div class="t" style="left:205.41px;top:826.60px;font-size:16px;line-height:16px;"><i style="width:8.90px;margin:0 -0.45px;transform:scaleX(0.854)">P</i><i style="width:10.67px;margin:0 -1.34px;transform:scaleX(0.712)">C</i><i style="width:8.00px;margin:0 0.00px;transform:scaleX(0.950)">o</i><i style="width:4.45px;margin:0 1.78px">l</i><i style="width:8.00px;margin:0 0.00px;transform:scaleX(0.950)">o</i><i style="width:5.33px;margin:0 1.34px">r</i></div>
<div class="ed" style="left:268px;top:823px;width:71px;height:22px"></div>
<div class="t" style="left:270.41px;top:826.60px;font-size:16px;line-height:16px;"><i style="width:8.90px;margin:0 -0.45px;transform:scaleX(0.854)">P</i><i style="width:10.67px;margin:0 -1.34px;transform:scaleX(0.712)">C</i><i style="width:8.00px;margin:0 0.00px;transform:scaleX(0.950)">o</i><i style="width:4.45px;margin:0 1.78px">l</i><i style="width:8.00px;margin:0 0.00px;transform:scaleX(0.950)">o</i><i style="width:5.33px;margin:0 1.34px">r</i></div>
<div class="btn" style="left:322px;top:825px;width:15px;height:18px"></div>
<svg class="a" style="left:326px;top:832px" width="7" height="4"><path d="M0 0 L7 0 L3.5 4Z" fill="#000"/></svg>
<div class="btn" style="left:452px;top:822px;width:129px;height:33px"></div>
<div class="t" style="left:480.57px;top:831.60px;font-size:16px;line-height:16px;"><i style="width:8.00px;margin:0 0.00px;transform:scaleX(0.950)">3</i><i style="width:11.55px;margin:0 -1.78px;transform:scaleX(0.658)">D</i><i style="width:10.67px;margin:0 -1.34px;transform:scaleX(0.712)">C</i><i style="width:7.10px;margin:0 0.45px">a</i><i style="width:8.00px;margin:0 0.00px;transform:scaleX(0.950)">p</i><i style="width:4.45px;margin:0 1.78px">t</i><i style="width:8.00px;margin:0 0.00px;transform:scaleX(0.950)">u</i><i style="width:5.33px;margin:0 1.34px">r</i><i style="width:7.10px;margin:0 0.45px">e</i></div>
<div class="btn" style="left:596px;top:822px;width:97px;height:33px"></div>
<div class="t" style="left:612.47px;top:831.60px;font-size:16px;line-height:16px;"><i style="width:10.67px;margin:0 -1.34px;transform:scaleX(0.712)">R</i><i style="width:7.10px;margin:0 0.45px">e</i><i style="width:7.10px;margin:0 0.45px">c</i><i style="width:8.00px;margin:0 0.00px;transform:scaleX(0.950)">o</i><i style="width:5.33px;margin:0 1.34px">r</i><i style="width:8.00px;margin:0 0.00px;transform:scaleX(0.950)">d</i><i style="width:8.00px;margin:0 0.00px;transform:scaleX(0.950)">3</i><i style="width:11.55px;margin:0 -1.78px;transform:scaleX(0.658)">D</i></div>
<div class="btn" style="left:596px;top:858px;width:97px;height:33px"></div>
<div class="t" style="left:616.41px;top:867.90px;font-size:16px;line-height:16px;"><i style="width:8.90px;margin:0 -0.45px;transform:scaleX(0.854)">P</i><i style="width:5.33px;margin:0 1.34px">r</i><i style="width:7.10px;margin:0 0.45px">e</i><i style="width:8.00px;margin:0 0.00px;transform:scaleX(0.950)">v</i><i style="width:4.45px;margin:0 1.78px">i</i><i style="width:7.10px;margin:0 0.45px">e</i><i style="width:11.55px;margin:0 -1.78px;transform:scaleX(0.658)">w</i></div>
</body></html>
